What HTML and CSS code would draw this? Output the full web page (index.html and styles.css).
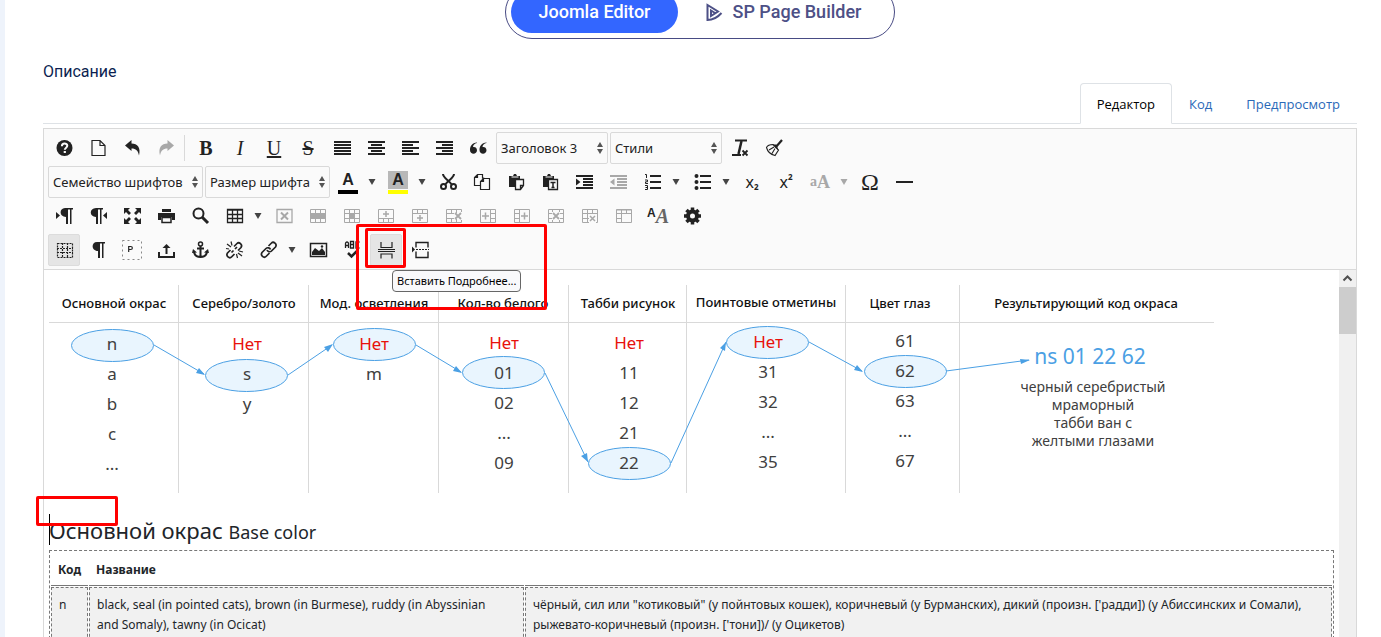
FILE: index.html
```html
<!DOCTYPE html>
<html lang="ru">
<head>
<meta charset="utf-8">
<title>Joomla Editor</title>
<link rel="stylesheet" href="styles.css">
</head>
<body>
<svg class="sprite" aria-hidden="true">
  <symbol id="help" viewBox="0 0 20 20"><circle cx="10.500" cy="10" r="8" fill="currentColor"/><path d="M7.900 8.200c0-3.600 5.400-3.400 5.400-.4 0 1.900-2.500 1.900-2.500 4" fill="none" stroke="#fafafa" stroke-width="2"/><path d="M9.700 13h2.200v2H9.700z" fill="#fafafa"/></symbol>
  <symbol id="page" viewBox="0 0 20 20"><path d="M4 2.500h8l5 5v10H4zM12 2.500v5h5" fill="none" stroke="currentColor" stroke-width="1.200"/></symbol>
  <symbol id="undo" viewBox="0 0 20 20"><path d="M3 7.500 9.500 2v3.500c6 0 9.500 4 7.500 12-1-5-3-7-7.500-7V13z" fill="currentColor"/></symbol>
  <symbol id="redo" viewBox="0 0 20 20"><path d="M18 7.500 11.500 2v3.500c-6 0-9.500 4-7.500 12 1-5 3-7 7.500-7V13z" fill="currentColor"/></symbol>
  <symbol id="justify" viewBox="0 0 20 20"><path d="M2 4h17M2 7h17M2 10h17M2 13h17M2 16h17" stroke="currentColor" stroke-width="2"/></symbol>
  <symbol id="center" viewBox="0 0 20 20"><path d="M2 4h17M5 7h11M2 10h17M5 13h11M2 16h17" stroke="currentColor" stroke-width="2"/></symbol>
  <symbol id="left" viewBox="0 0 20 20"><path d="M2 4h17M2 7h11M2 10h17M2 13h11M2 16h17" stroke="currentColor" stroke-width="2"/></symbol>
  <symbol id="right" viewBox="0 0 20 20"><path d="M2 4h17M8 7h11M2 10h17M8 13h11M2 16h17" stroke="currentColor" stroke-width="2"/></symbol>
  <symbol id="quote" viewBox="0 0 20 20"><path d="M9 4.500C4 5 2 8 2 12c0 5 7 4.800 7 .3 0-2.700-2-3.700-4-3.300.2-2 1.500-3.500 4-4zM18.500 4.500C13.500 5 11.500 8 11.500 12c0 5 7 4.800 7 .3 0-2.700-2-3.700-4-3.300.2-2 1.500-3.500 4-4z" fill="currentColor"/></symbol>
  <symbol id="clear" viewBox="0 0 20 20"><path d="M5 2.500h12M2 17h9M12.500 12.500l5 5M17.500 12.500l-5 5" stroke="currentColor" stroke-width="1.800"/><path d="M11.500 3 8.500 16" stroke="currentColor" stroke-width="2.500"/></symbol>
  <symbol id="broom" viewBox="0 0 20 20"><path d="M18 2 11.500 9.500" stroke="currentColor" stroke-width="2.200"/><path d="M9 6.500 14.500 12 11 17.500c-4-1-7.500-4-8.500-8 1-2 4-3 6.500-3zM5 12l5-3M8 15.500l3-5" fill="none" stroke="currentColor" stroke-width="1.100"/><path d="M9 6.500h3.500l2 6z" fill="currentColor"/></symbol>
  <symbol id="cut" viewBox="0 0 20 20"><path d="M5 2c0 4 7 7 9 11M16 2c0 4-7 7-9 11" fill="none" stroke="currentColor" stroke-width="2"/><circle cx="5.500" cy="14.500" r="2.500" fill="none" stroke="currentColor" stroke-width="2"/><circle cx="15.500" cy="14.500" r="2.500" fill="none" stroke="currentColor" stroke-width="2"/></symbol>
  <symbol id="copy" viewBox="0 0 20 20"><path d="M8.500 13.500h-6v-8l3-3h5v4M5.500 2.500v3h-3M11.500 6.500h6v11h-9v-8l3-3v3h-3" fill="none" stroke="currentColor" stroke-width="1.200"/></symbol>
  <symbol id="paste" viewBox="0 0 20 20"><path d="M3 4h4l1-2h2l1 2h3v4H9v7H3z" fill="currentColor"/><path d="M9.500 7.500h8v6l-3 4h-5zM17.500 13.500h-3v4" fill="#fafafa" stroke="currentColor" stroke-width="1.300"/><path d="M5.500 5h7" stroke="#fafafa"/></symbol>
  <symbol id="pastetext" viewBox="0 0 20 20"><path d="M3 4h4l1-2h2l1 2h3v4H9v7H3z" fill="currentColor"/><path d="M8.500 7.500h9v10h-9z" fill="#fafafa" stroke="currentColor" stroke-width="1.300"/><path d="M10.500 10.500h5M13 10v6M11.500 15.500h3" stroke="currentColor" stroke-width="1.500"/><path d="M5.500 5h7" stroke="#fafafa"/></symbol>
  <symbol id="indent" viewBox="0 0 20 20"><path d="M2 4h17M9 7h10M9 10h10M9 13h10M2 16h17" stroke="currentColor" stroke-width="2"/><path d="M2 6.500v7L6.500 10z" fill="currentColor"/></symbol>
  <symbol id="outdent" viewBox="0 0 20 20"><path d="M2 4h17M9 7h10M9 10h10M9 13h10M2 16h17" stroke="currentColor" stroke-width="2"/><path d="M6.500 6.500v7L2 10z" fill="currentColor"/></symbol>
  <symbol id="ol" viewBox="0 0 20 20"><path d="M8 4h11M8 10h11M8 16h11" stroke="currentColor" stroke-width="2"/><path d="M3 2.500h1.500V6M3 8h2.500v1.800H3.500v1.700h2.500M3 13.500h2.500v4H3M3.500 15.500h2" fill="none" stroke="currentColor"/></symbol>
  <symbol id="ul" viewBox="0 0 20 20"><path d="M8 4h11M8 10h11M8 16h11" stroke="currentColor" stroke-width="2"/><path d="M4.500 4h0M4.500 10h0M4.500 16h0" stroke="currentColor" stroke-width="4" stroke-linecap="round"/></symbol>
  <symbol id="hr" viewBox="0 0 20 20"><path d="M2 10h17" stroke="currentColor" stroke-width="2"/></symbol>
  <symbol id="ltr" viewBox="0 0 20 20"><path d="M2 6v7l4-3.500zM11 2h8v1.500h-1.500V18H16V3.500h-2V18h-2v-7C5 11 5 2 11 2z" fill="currentColor"/></symbol>
  <symbol id="rtl" viewBox="0 0 20 20"><path d="M19 6v7l-4-3.500zM8 2h7v1.500h-1.500V18H12V3.500h-2V18H8v-7C1 11 1 2 8 2z" fill="currentColor"/></symbol>
  <symbol id="pilcrow" viewBox="0 0 20 20"><path d="M9 2h8v1.500h-1.500V18H14V3.500h-2V18h-2v-7C3 11 3 2 9 2z" fill="currentColor"/></symbol>
  <symbol id="full" viewBox="0 0 20 20"><path d="M2 2h6L6 4l3 3-2 2-3-3-2 2zM19 2h-6l2 2-3 3 2 2 3-3 2 2zM2 18h6l-2-2 3-3-2-2-3 3-2-2zM19 18h-6l2-2-3-3 2-2 3 3 2-2z" fill="currentColor"/></symbol>
  <symbol id="print" viewBox="0 0 20 20"><path d="M6 3h9v3H6zM2 7h17v7h-3v-3H5v3H2z" fill="currentColor"/><path d="M6 11.500h9v5H6z" fill="none" stroke="currentColor" stroke-width="1.500"/></symbol>
  <symbol id="search" viewBox="0 0 20 20"><circle cx="8.500" cy="7.500" r="5" fill="none" stroke="currentColor" stroke-width="2"/><path d="m12 11 6 6" stroke="currentColor" stroke-width="3"/></symbol>
  <symbol id="grid" viewBox="0 0 20 20"><path d="M3.500 3.500h15v13h-15zM3.500 4h15M3.500 8.500h15M3.500 12.500h15M8.500 4v12.500M13.500 4v12.500" fill="none" stroke="currentColor" stroke-width="1.300"/></symbol>
  <symbol id="t-del" viewBox="0 0 20 20"><path d="M3 3.500h15v13H3z" fill="none" stroke="currentColor" stroke-width="1.300"/><path d="m7 6.500 7 7M14 6.500l-7 7" stroke="currentColor" stroke-width="2"/></symbol>
  <symbol id="t-row" viewBox="0 0 20 20"><path d="M2.500 3.500h15v13h-15zM7.500 3v14M12.500 3v14" fill="none" stroke="currentColor"/><path d="M2 7h16v6H2z" fill="currentColor"/></symbol>
  <symbol id="t-cell" viewBox="0 0 20 20"><path d="M2.500 3.500h15v13h-15zM7.500 3v14M12.500 3v14M2 7.500h16M2 12.500h16" fill="none" stroke="currentColor"/><path d="M7 7h6v6H7z" fill="currentColor"/></symbol>
  <symbol id="t-before" viewBox="0 0 20 20"><path d="M2.500 3.500h15v13h-15zM2 12.500h16M7.500 13v4M12.500 13v4" fill="none" stroke="currentColor"/><path d="M7 8h6M10 5v6" stroke="currentColor" stroke-width="1.500"/></symbol>
  <symbol id="t-after" viewBox="0 0 20 20"><path d="M2.500 3.500h15v13h-15zM2 7.500h16M7.500 3v4M12.500 3v4" fill="none" stroke="currentColor"/><path d="M7 12h6M10 9v6" stroke="currentColor" stroke-width="1.500"/></symbol>
  <symbol id="t-rowdel" viewBox="0 0 20 20"><path d="M17.500 6v-2.500h-15v13h15V14M7.500 3v4M12.500 3v4M7.500 13v4M12.500 13v4M2 7.500h8M2 12.500h8" fill="none" stroke="currentColor"/><path d="m11 7 6 6M17 7l-6 6" stroke="currentColor" stroke-width="1.800"/></symbol>
  <symbol id="t-colbefore" viewBox="0 0 20 20"><path d="M2.500 3.500h15v13h-15zM12.500 3v14M13 7.500h5M13 12.500h5" fill="none" stroke="currentColor"/><path d="M4 10h7M7.500 6.500v7" stroke="currentColor" stroke-width="1.500"/></symbol>
  <symbol id="t-colafter" viewBox="0 0 20 20"><path d="M2.500 3.500h15v13h-15zM7.500 3v14M2 7.500h5M2 12.500h5" fill="none" stroke="currentColor"/><path d="M9 10h7M12.500 6.500v7" stroke="currentColor" stroke-width="1.500"/></symbol>
  <symbol id="t-coldel" viewBox="0 0 20 20"><path d="M2.500 3.500h15v13h-15zM2 7.500h4M2 12.500h4M14 7.500h4M14 12.500h4M6.500 3v3M13.500 3v3M6.500 14v3M13.500 14v3" fill="none" stroke="currentColor"/><path d="m7 7 6 6M13 7l-6 6" stroke="currentColor" stroke-width="1.800"/></symbol>
  <symbol id="t-split" viewBox="0 0 20 20"><path d="M9 16.500H2.500v-13h15v13H16M7.500 3v14M12.500 3v5M2 7.500h16M2 12.500h7" fill="none" stroke="currentColor"/><path d="m10 10 5 5M15 10l-5 5" stroke="currentColor" stroke-width="1.500"/></symbol>
  <symbol id="t-merge" viewBox="0 0 20 20"><path d="M2.500 3.500h15v13h-15zM2.500 4h15M7.500 3v14M12.500 3v4M2 7.500h16M2 12.500h5" fill="none" stroke="currentColor"/></symbol>
  <symbol id="gear" viewBox="0 0 20 20"><circle cx="10.500" cy="10" r="4.500" fill="none" stroke="currentColor" stroke-width="4"/><path d="M10.500 1.500v4M10.500 14.500v4M2 10h4M15 10h4M4.500 4l3 3M13.500 13l3 3M4.500 16l3-3M13.500 7l3-3" stroke="currentColor" stroke-width="3.500"/></symbol>
  <symbol id="guides" viewBox="0 0 20 20"><path d="M3.500 3.500h15v14h-15zM8.500 3v15M13.500 3v15M3 8.500h16M3 12.500h16" fill="none" stroke="currentColor" stroke-width="1.200" stroke-dasharray="2 1"/></symbol>
  <symbol id="blocks" viewBox="0 0 20 20"><path d="M.5.5h19v19H.5z" fill="none" stroke="#888" stroke-dasharray="2 3"/><path d="M6.700 12V6.500h2c2.200 0 2.200 3 0 3h-2" fill="none" stroke="currentColor" stroke-width="1.200"/></symbol>
  <symbol id="upload" viewBox="0 0 20 20"><path d="M3 12v5h15v-5" fill="none" stroke="currentColor" stroke-width="2"/><path d="M10.500 14V6" stroke="currentColor" stroke-width="2"/><path d="M6.500 8h8l-4-4z" fill="currentColor"/></symbol>
  <symbol id="anchor" viewBox="0 0 20 20"><circle cx="10.500" cy="4" r="2" fill="none" stroke="currentColor" stroke-width="1.500"/><path d="M10.500 6v11M7 8.500h7M4 12c.5 3 3 5 6.500 5s6-2 6.500-5" fill="none" stroke="currentColor" stroke-width="2"/><path d="m2 13 1-4 4 3.500zM19 13l-1-4-4 3.500z" fill="currentColor"/></symbol>
  <symbol id="link" viewBox="0 0 20 20"><g fill="none" stroke="currentColor" stroke-width="1.700"><path d="m10.500 6 3-3c2-2 6 1 4 4l-4 4c-1.500 1.500-4 .5-4.500-1"/><path d="m11.500 13-3.500 3.500c-2 2-6-1-4-4l4-4c1.500-1.500 4-.5 4.500 1"/></g></symbol>
  <symbol id="unlink" viewBox="0 0 20 20"><g fill="none" stroke="currentColor" stroke-width="1.700"><path d="m10 6.500 3-3c2-2 6 1 4 4l-3 3"/><path d="m10.500 14-3 3c-2 2-6-1-4-4l3-3M7.500 12.500l2-2M11 9l2-2"/></g><path d="M3 4l4 3M7 1.500l1 4M2 8.500l3 .5M14 13l4 3M12.500 14l1 4M15 11l4 1" stroke="currentColor" stroke-width="1.200"/></symbol>
  <symbol id="image" viewBox="0 0 20 20"><path d="M2.500 3.500h16v13h-16z" fill="none" stroke="currentColor" stroke-width="1.500"/><path d="M4 15v-3l3-4 4 3 3-3 3 4v3z" fill="currentColor"/><circle cx="14" cy="6.500" r="1.200" fill="currentColor"/></symbol>
  <symbol id="spell" viewBox="0 0 20 20"><path d="M3.500 8V3.500c0-2 3-2 3 0V8M3.500 5.500h3M8.500 1.500v6.500h3v-6.500zM8.500 4.500h3M17.500 2h-3.500v6h3.500" fill="none" stroke="currentColor" stroke-width="1.300"/><path d="m6 13 3.500 3.500 6-6" fill="none" stroke="currentColor" stroke-width="2.500"/></symbol>
  <symbol id="more" viewBox="0 0 20 20"><path d="M2 9.500h17M2 11.500h17" stroke="currentColor"/><path d="M5 2v5.500h11V2M5 18.500V14h11v4.500" fill="none" stroke="currentColor" stroke-width="1.200"/></symbol>
  <symbol id="break" viewBox="0 0 20 20"><path d="M2 6.500v6L5 9.500z" fill="currentColor"/><path d="M6 7.500v-5h12v5M6 11.500v6h12v-6" fill="none" stroke="currentColor" stroke-width="1.400"/><path d="M6 9.500h13" stroke="currentColor" stroke-dasharray="2 1"/></symbol>
  <symbol id="caret" viewBox="0 0 8 8"><path d="M.5 1h7L4 7z" fill="currentColor"/></symbol>
</svg>

<main class="panel">
  <div class="switcher">
    <button class="switch-btn active">Joomla Editor</button>
    <button class="switch-btn">
      <svg width="17" height="20" viewBox="0 0 17 20" fill="none" stroke="currentColor" stroke-width="2"><path d="M15.500 11C11 16 7 18 1.500 18V3L12 9.500 5 14V8.500l4 2.500"/></svg>
      SP Page Builder
    </button>
  </div>

  <h2 class="field-label">Описание</h2>

  <nav class="tabs">
    <a class="tab active" href="#editor">Редактор</a>
    <a class="tab" href="#code">Код</a>
    <a class="tab" href="#preview">Предпросмотр</a>
  </nav>

  <section class="editor" id="editor">
    <div class="toolbar">
      <div class="row">
        <button class="tool" aria-label="Справка"><svg><use href="#help"/></svg></button>
        <button class="tool" aria-label="Новый документ"><svg><use href="#page"/></svg></button>
        <button class="tool" aria-label="Отменить"><svg><use href="#undo"/></svg></button>
        <button class="tool" aria-label="Вернуть" disabled><svg><use href="#redo"/></svg></button>
        <span class="separator"></span>
        <button class="tool letter bold">B</button>
        <button class="tool letter italic">I</button>
        <button class="tool letter underline">U</button>
        <button class="tool letter strike">S</button>
        <button class="tool" aria-label="По ширине"><svg><use href="#justify"/></svg></button>
        <button class="tool" aria-label="По центру"><svg><use href="#center"/></svg></button>
        <button class="tool" aria-label="По левому краю"><svg><use href="#left"/></svg></button>
        <button class="tool" aria-label="По правому краю"><svg><use href="#right"/></svg></button>
        <button class="tool" aria-label="Цитата"><svg><use href="#quote"/></svg></button>
        <span class="picker format"><select aria-label="Формат"><option>Заголовок 3</option></select></span>
        <span class="picker format"><select aria-label="Стиль"><option>Стили</option></select></span>
        <button class="tool" aria-label="Очистить формат"><svg><use href="#clear"/></svg></button>
        <button class="tool" aria-label="Очистить код"><svg><use href="#broom"/></svg></button>
      </div>
      <div class="row">
        <span class="picker family"><select aria-label="Шрифт"><option>Семейство шрифтов</option></select></span>
        <span class="picker size"><select aria-label="Размер"><option>Размер шрифта</option></select></span>
        <span class="split"><button class="tool swatch"><span class="glyph">A</span><span class="bar"></span></button><button class="drop" aria-label="Цвет текста"><svg><use href="#caret"/></svg></button></span>
        <span class="split"><button class="tool swatch marker"><span class="glyph">A</span><span class="bar"></span></button><button class="drop" aria-label="Цвет фона"><svg><use href="#caret"/></svg></button></span>
        <button class="tool" aria-label="Вырезать"><svg><use href="#cut"/></svg></button>
        <button class="tool" aria-label="Копировать"><svg><use href="#copy"/></svg></button>
        <button class="tool" aria-label="Вставить"><svg><use href="#paste"/></svg></button>
        <button class="tool" aria-label="Вставить текст"><svg><use href="#pastetext"/></svg></button>
        <button class="tool" aria-label="Увеличить отступ"><svg><use href="#indent"/></svg></button>
        <button class="tool" aria-label="Уменьшить отступ" disabled><svg><use href="#outdent"/></svg></button>
        <span class="split"><button class="tool" aria-label="Нумерация"><svg><use href="#ol"/></svg></button><button class="drop" aria-label="Вид нумерации"><svg><use href="#caret"/></svg></button></span>
        <span class="split"><button class="tool" aria-label="Маркеры"><svg><use href="#ul"/></svg></button><button class="drop" aria-label="Вид маркеров"><svg><use href="#caret"/></svg></button></span>
        <button class="tool script">x<sub>2</sub></button>
        <button class="tool script">x<sup>2</sup></button>
        <span class="split"><button class="tool case" disabled><small>a</small>A</button><button class="drop" aria-label="Регистр" disabled><svg><use href="#caret"/></svg></button></span>
        <button class="tool omega">Ω</button>
        <button class="tool" aria-label="Линия"><svg><use href="#hr"/></svg></button>
      </div>
      <div class="row">
        <button class="tool" aria-label="Слева направо"><svg><use href="#ltr"/></svg></button>
        <button class="tool" aria-label="Справа налево"><svg><use href="#rtl"/></svg></button>
        <button class="tool" aria-label="Во весь экран"><svg><use href="#full"/></svg></button>
        <button class="tool" aria-label="Печать"><svg><use href="#print"/></svg></button>
        <button class="tool" aria-label="Поиск"><svg><use href="#search"/></svg></button>
        <span class="split"><button class="tool" aria-label="Таблица"><svg><use href="#grid"/></svg></button><button class="drop" aria-label="Размер таблицы"><svg><use href="#caret"/></svg></button></span>
        <button class="tool" aria-label="Удалить таблицу" disabled><svg><use href="#t-del"/></svg></button>
        <button class="tool" aria-label="Свойства строки" disabled><svg><use href="#t-row"/></svg></button>
        <button class="tool" aria-label="Свойства ячейки" disabled><svg><use href="#t-cell"/></svg></button>
        <button class="tool" aria-label="Строка выше" disabled><svg><use href="#t-before"/></svg></button>
        <button class="tool" aria-label="Строка ниже" disabled><svg><use href="#t-after"/></svg></button>
        <button class="tool" aria-label="Удалить строку" disabled><svg><use href="#t-rowdel"/></svg></button>
        <button class="tool" aria-label="Столбец слева" disabled><svg><use href="#t-colbefore"/></svg></button>
        <button class="tool" aria-label="Столбец справа" disabled><svg><use href="#t-colafter"/></svg></button>
        <button class="tool" aria-label="Удалить столбец" disabled><svg><use href="#t-coldel"/></svg></button>
        <button class="tool" aria-label="Разделить ячейки" disabled><svg><use href="#t-split"/></svg></button>
        <button class="tool" aria-label="Объединить ячейки" disabled><svg><use href="#t-merge"/></svg></button>
        <button class="tool styleprops"><small>A</small><i>A</i></button>
        <button class="tool" aria-label="Атрибуты"><svg><use href="#gear"/></svg></button>
      </div>
      <div class="row">
        <button class="tool pressed" aria-label="Границы"><svg><use href="#guides"/></svg></button>
        <button class="tool" aria-label="Символы"><svg><use href="#pilcrow"/></svg></button>
        <button class="tool" aria-label="Блоки"><svg><use href="#blocks"/></svg></button>
        <button class="tool" aria-label="Загрузить"><svg><use href="#upload"/></svg></button>
        <button class="tool" aria-label="Якорь"><svg><use href="#anchor"/></svg></button>
        <button class="tool" aria-label="Убрать ссылку"><svg><use href="#unlink"/></svg></button>
        <span class="split"><button class="tool" aria-label="Ссылка"><svg><use href="#link"/></svg></button><button class="drop" aria-label="Тип ссылки"><svg><use href="#caret"/></svg></button></span>
        <button class="tool" aria-label="Изображение"><svg><use href="#image"/></svg></button>
        <button class="tool" aria-label="Орфография"><svg><use href="#spell"/></svg></button>
        <span class="callout">
          <button class="tool pressed" aria-describedby="tip"><svg><use href="#more"/></svg></button>
          <span class="tooltip" id="tip" role="tooltip">Вставить Подробнее...</span>
          <span class="mark mark-area"></span>
          <span class="mark mark-button"></span>
        </span>
        <button class="tool" aria-label="Разрыв страницы"><svg><use href="#break"/></svg></button>
      </div>
    </div>

    <div class="canvas">
      <div class="document">
        <svg class="scheme" width="1166" height="216" viewBox="49 280 1166 216">
          <path class="rule" d="M49 322.500h1165M178.500 285v208M308.500 285v208M438.500 285v208M568.500 285v208M686.500 285v208M845.500 285v208M959.500 285v208"/>
          <g class="node">
            <ellipse cx="112.500" cy="345.500" rx="41" ry="16"/><ellipse cx="246.500" cy="375.500" rx="41" ry="16"/>
            <ellipse cx="374.500" cy="344.500" rx="41" ry="16"/><ellipse cx="503.500" cy="372.500" rx="41" ry="16"/>
            <ellipse cx="629.500" cy="463.500" rx="41" ry="16"/><ellipse cx="767.500" cy="342.500" rx="41" ry="16"/>
            <ellipse cx="905.500" cy="371.500" rx="41" ry="16"/>
          </g>
          <path class="arrow" d="m154 345 50 29M288 375l44-30M416 345l45 27M545 373l43 89M671 463l55-121M809 342l53 29M946 371l83-11"/>
          <path class="head" d="m205 375-9-2 3-5zM333 344l-5 8-4-5zM462 373l-9-2 3-5zM588 462l-7-6 6-3zM726 342l-1 9-5-3zM863 372l-9-2 3-5zM1030 360l-9 4-1-5z"/>
          <g class="head-text">
            <text x="114" y="308">Основной окрас</text><text x="244" y="308">Серебро/золото</text>
            <text x="374" y="308">Мод. осветления</text><text x="503" y="308">Кол-во белого</text>
            <text x="628" y="308">Табби рисунок</text><text x="766" y="307">Поинтовые отметины</text>
            <text x="900" y="308">Цвет глаз</text><text x="1086" y="308">Результирующий код окраса</text>
          </g>
          <g class="code">
            <text x="112" y="350">n</text><text x="112" y="380">a</text><text x="112" y="410">b</text><text x="112" y="440">c</text><text x="112" y="470">...</text>
            <text x="247" y="380">s</text><text x="247" y="410">y</text>
            <text x="374" y="380">m</text>
            <text x="504" y="379">01</text><text x="504" y="409">02</text><text x="504" y="439">...</text><text x="504" y="469">09</text>
            <text x="629" y="379">11</text><text x="629" y="409">12</text><text x="629" y="439">21</text><text x="629" y="469">22</text>
            <text x="768" y="378">31</text><text x="768" y="408">32</text><text x="768" y="438">...</text><text x="768" y="468">35</text>
            <text x="905" y="347">61</text><text x="905" y="377">62</text><text x="905" y="407">63</text><text x="905" y="437">...</text><text x="905" y="467">67</text>
          </g>
          <g class="code none">
            <text x="247" y="350">Нет</text><text x="374" y="350">Нет</text><text x="504" y="349">Нет</text><text x="629" y="349">Нет</text><text x="768" y="348">Нет</text>
          </g>
          <text class="result" x="1090" y="364">ns 01 22 62</text>
          <g class="caption">
            <text x="1093" y="392">черный серебристый</text><text x="1093" y="410">мраморный</text>
            <text x="1093" y="428">табби ван с</text><text x="1093" y="446">желтыми глазами</text>
          </g>
        </svg>

        <h3 class="title"><span class="cursor"></span><span class="mark mark-cursor"></span>Основной окрас <small>Base color</small></h3>

        <table class="colors">
          <colgroup><col class="col-code"><col class="col-name"><col></colgroup>
          <thead><tr><th>Код</th><th>Название</th><th></th></tr></thead>
          <tbody>
            <tr>
              <td>n</td>
              <td class="name">black, seal (in pointed cats), brown (in Burmese), ruddy (in Abyssinian and Somaly), tawny (in Ocicat)</td>
              <td>чёрный, сил или "котиковый" (у пойнтовых кошек), коричневый (у Бурманских), дикий (произн. ['радди]) (у Абиссинских и Сомали), рыжевато-коричневый (произн. ['тони])/ (у Оцикетов)</td>
            </tr>
          </tbody>
        </table>
      </div>
      <div class="scrollbar">
        <svg width="17" height="17" viewBox="0 0 17 17"><path d="m4.500 10.500 4-4 4 4" fill="none" stroke="#505050" stroke-width="2"/></svg>
        <span class="thumb"></span>
      </div>
    </div>
  </section>
</main>
</body>
</html>
```
FILE: styles.css
```css
* { box-sizing: border-box; }
body {
  margin: 0;
  height: 100vh;
  overflow: hidden;
  display: flex;
  background: #fff;
  border-left: 5px solid #eef3fb;
  font-family: "Noto Sans", "Open Sans", sans-serif;
  font-size: 12px;
  color: #212529;
}
button, select { font: inherit; color: inherit; }
button { border: 0; padding: 0; background: none; }
.sprite { position: absolute; width: 0; height: 0; }
.panel { flex: 1; min-width: 0; display: flex; flex-direction: column; padding: 0 24px 0 38px; }

.switcher {
  display: flex;
  align-self: center;
  margin-top: -15px;
  padding: 5px;
  border: 1px solid #484b84;
  border-radius: 27px;
  font: 500 18px/42px Roboto, sans-serif;
}
.switch-btn { display: flex; align-items: center; gap: 9px; height: 42px; padding: 0 28px; border-radius: 21px; color: #4d5086; }
.switch-btn.active { background: #3366ff; color: #fff; }

.field-label { margin: 23px 0 0; font: 400 16px/20px Roboto, sans-serif; color: #0c1f51; }

.tabs { display: flex; justify-content: flex-end; margin-top: 1px; border-bottom: 1px solid #dee2e6; font: 13px "Open Sans", "Noto Sans", sans-serif; }
.tab { padding: 11px 16px 9px; margin-bottom: -1px; border: 1px solid transparent; line-height: 19px; color: #2a69b8; text-decoration: none; }
.tab.active { border-color: #dee2e6 #dee2e6 #fff; border-radius: 4px 4px 0 0; color: #000; background: #fff; }

.editor { flex: 1; display: flex; flex-direction: column; margin-top: 4px; border: 1px solid #d9d9d9; border-bottom: 0; min-height: 0; }
.toolbar { display: flex; flex-direction: column; gap: 2px; padding: 3px 4px; background: #fafafa; border-bottom: 1px solid #d9d9d9; color: #222; }
.row { display: flex; gap: 2px; height: 32px; }
.tool { flex: none; width: 32px; height: 32px; display: flex; align-items: center; justify-content: center; }
.tool svg { width: 20px; height: 20px; }
.tool:disabled, .drop:disabled { color: #a8a8a8; }
.pressed { background: #e5e5e5; border: 1px solid #dcdcdc; border-radius: 2px; }
.separator { width: 1px; height: 26px; margin: 3px 3px 0 0; background: #d9d9d9; }
.letter { font: 20px "Liberation Serif", serif; }
.bold { font-weight: bold; }
.italic { font-style: italic; }
.underline { text-decoration: underline; }
.strike { text-decoration: line-through; }
.split { display: flex; width: 48px; }
.drop { width: 16px; display: flex; align-items: center; justify-content: center; color: #444; }
.drop svg { width: 8px; height: 8px; }

.picker { display: flex; align-items: center; position: relative; border: 1px solid #d9d9d9; border-radius: 2px; font-size: 13px; }
.picker select { appearance: none; width: 100%; height: 30px; padding: 0 4px; border: 0; background: none; }
.picker::before, .picker::after { content: ""; position: absolute; right: 4px; border: 3px solid transparent; pointer-events: none; }
.picker::before { top: 6px; border-bottom: 5px solid #555; }
.picker::after { top: 16px; border-top: 5px solid #555; }
.format { width: 112px; }
.family { width: 155px; }
.size { width: 125px; }

.swatch { flex-direction: column; font: bold 16px/18px "Liberation Sans", sans-serif; gap: 1px; }
.swatch .bar { width: 20px; height: 4px; background: #000; }
.swatch .glyph { width: 20px; text-align: center; }
.marker .glyph { background: #b8b8b8; }
.marker .bar { background: #ff0; }
.script { font-size: 16px; }
.script sub, .script sup { font-size: 8px; font-weight: bold; line-height: 8px; }
.script sub { align-self: flex-end; margin-bottom: 7px; }
.script sup { align-self: flex-start; margin-top: 7px; }
.case { font: bold 18px "Liberation Serif", serif; }
.case small { font-size: 14px; }
.omega { font: 24px "Liberation Serif", serif; }
.styleprops { font: bold 20px "Liberation Serif", serif; }
.styleprops small { align-self: flex-start; margin-top: 6px; font: bold 12px "Liberation Sans", sans-serif; }
.styleprops i { color: #666; }

.callout { position: relative; z-index: 2; }
.tooltip { position: absolute; left: 22px; top: 36px; padding: 0 4px; border: 1px solid #676767; border-radius: 4px; background: #f9f9fb; font: 11px/20px "Noto Sans", sans-serif; color: #000; white-space: nowrap; }
.mark { position: absolute; border: 3px solid #f00; border-radius: 2px; pointer-events: none; }
.mark-area { left: -14px; top: -10px; width: 191px; height: 86px; }
.mark-button { left: -5px; top: -6px; width: 41px; height: 40px; }
.mark-cursor { left: -13px; top: -19px; width: 82px; height: 30px; }

.canvas { flex: 1; display: flex; min-height: 0; }
.document { flex: 1; min-width: 0; padding: 10px 5px 0; overflow: visible; }
.scheme { display: block; text-anchor: middle; }
.rule { fill: none; stroke: #d9d9d9; }
.node { fill: #e9f5fe; stroke: #4ba0e4; }
.arrow { fill: none; stroke: #4ba0e4; }
.head { fill: #4ba0e4; }
.head-text { font-size: 13px; font-weight: 500; fill: #111; }
.code { font-size: 17px; fill: #404040; }
.none { fill: #e8120c; }
.result { font-size: 21px; fill: #4ba0e4; }
.caption { font-size: 14px; fill: #404040; }

.title { position: relative; margin: 19px 0 3px; font-size: 22px; font-weight: 400; line-height: 30px; }
.title small { font-size: 18px; }
.cursor { position: absolute; left: 0; top: -1px; width: 1px; height: 31px; background: #000; }

.colors { width: 100%; table-layout: fixed; border: 1px dashed #777; border-spacing: 1px; line-height: 20px; }
.col-code { width: 37px; }
.col-name { width: 435px; }
.colors th { height: 34px; padding: 2px 7px 0; border-bottom: 1px solid #777; text-align: left; font-weight: 700; }
.colors td { padding: 7px 7px 6px; border: 1px dashed #777; background: #f1f1f1; vertical-align: top; }
.colors .name { padding-right: 24px; }

.scrollbar { width: 17px; display: flex; flex-direction: column; background: #f0f0f0; }
.thumb { height: 47px; background: #cdcdcd; }
```
